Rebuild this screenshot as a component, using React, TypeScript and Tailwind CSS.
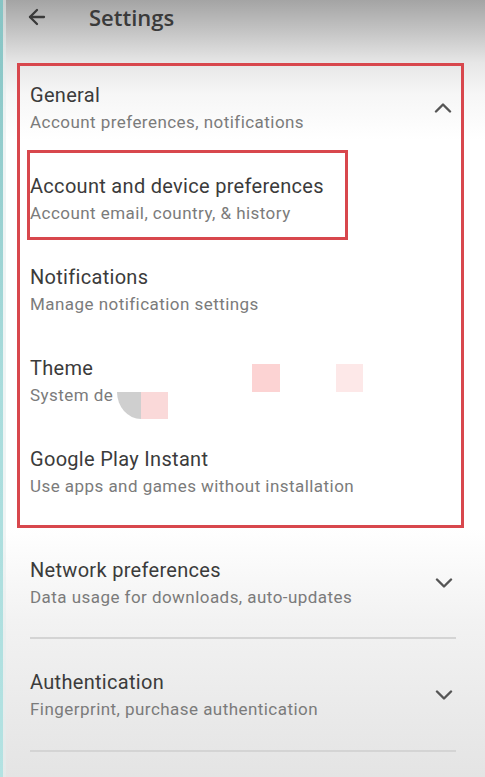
import { ArrowLeft } from 'lucide-react';

interface SettingItem {
    title: string;
    subtitle: string;
}

const Chevron = ({ up }: { up?: boolean }) => (
    <svg width="18" height="11" viewBox="0 0 18 11" className="shrink-0">
        <path
            d={up ? 'M2 9.5 L9 2.5 L16 9.5' : 'M2 1.5 L9 8.5 L16 1.5'}
            fill="none"
            stroke="#555"
            strokeWidth="2.4"
            strokeLinecap="round"
            strokeLinejoin="round"
        />
    </svg>
);

const ItemText = ({ title, subtitle }: SettingItem) => (
    <div className="flex flex-col whitespace-nowrap">
        <div className="text-[20px] leading-[26px] tracking-[0.3px] text-[#3b3b3b]">{title}</div>
        <div className="text-[17px] leading-[28px] tracking-[0.45px] text-[#7b7b7b]">{subtitle}</div>
    </div>
);

const generalItems: SettingItem[] = [
    { title: 'Account and device preferences', subtitle: 'Account email, country, & history' },
    { title: 'Notifications', subtitle: 'Manage notification settings' },
];

export default function App() {
    return (
        <div
            className="relative w-[485px] h-[777px] overflow-hidden flex bg-[linear-gradient(to_bottom,#a4a4a4_0%,#c4c4c4_4%,#e6e6e6_8%,#f6f6f6_12%,#ffffff_18%,#ffffff_68%,#f2f2f2_80%,#e4e4e4_100%)]"
            style={{ fontFamily: 'Roboto, "Liberation Sans", sans-serif' }}
        >
            <div className="w-[3px] shrink-0 bg-[linear-gradient(to_bottom,#86c4c4,#a9dcdc_50%,#b3e2e2)]" />
            <div className="w-[3px] shrink-0 bg-[#e4ecec]/60" />

            <div className="flex-1 flex flex-col">
                {/* top bar */}
                <div className="h-[34px] flex items-center pl-[19px]">
                    <ArrowLeft size={24} strokeWidth={2.3} color="#3a3a3a" />
                    <span className="ml-[40px] text-[22px] font-semibold text-[#3a3a3a]" style={{ fontFamily: '"Open Sans", Roboto, sans-serif' }}>
                        Settings
                    </span>
                </div>

                {/* expanded General group */}
                <div className="mt-[29px] ml-[11px] w-[447px] border-[3px] border-[#d8474d] flex flex-col">
                    <div className="h-[91px] pt-[16px] pl-[10px] pr-[9px] flex items-start justify-between">
                        <ItemText title="General" subtitle="Account preferences, notifications" />
                        <div className="mt-[20px]">
                            <Chevron up />
                        </div>
                    </div>

                    {generalItems.map((item, index) => (
                        <div key={item.title} className="relative h-[91px] pt-[16px] pl-[10px]">
                            <ItemText {...item} />
                            {index === 0 && (
                                <div className="absolute left-[7px] top-[-7px] w-[321px] h-[90px] border-[3px] border-[#d8474d]" />
                            )}
                        </div>
                    ))}

                    <div className="relative h-[91px] pt-[16px] pl-[10px]">
                        <ItemText title="Theme" subtitle="System de" />
                        <div className="absolute left-[97px] top-[53px] w-[24px] h-[27px] bg-[#cfcfcf] rounded-bl-[100%]" />
                        <div className="absolute left-[121px] top-[53px] w-[27px] h-[27px] bg-[#fad9d9]" />
                        <div className="absolute left-[232px] top-[25px] w-[28px] h-[28px] bg-[#fcd3d3]" />
                        <div className="absolute left-[316px] top-[25px] w-[27px] h-[28px] bg-[#fde8e8]" />
                    </div>

                    <div className="h-[95px] pt-[16px] pl-[10px]">
                        <ItemText title="Google Play Instant" subtitle="Use apps and games without installation" />
                    </div>
                </div>

                {/* collapsed groups */}
                <div className="ml-[24px] w-[426px] flex flex-col">
                    <div className="h-[111px] pt-[29px] flex items-start justify-between border-b-2 border-[#d4d4d4]">
                        <ItemText title="Network preferences" subtitle="Data usage for downloads, auto-updates" />
                        <div className="mt-[21px] mr-[3px]">
                            <Chevron />
                        </div>
                    </div>
                    <div className="h-[113px] pt-[30px] flex items-start justify-between border-b-2 border-[#d4d4d4]">
                        <ItemText title="Authentication" subtitle="Fingerprint, purchase authentication" />
                        <div className="mt-[21px] mr-[3px]">
                            <Chevron />
                        </div>
                    </div>
                </div>
            </div>
        </div>
    );
}
